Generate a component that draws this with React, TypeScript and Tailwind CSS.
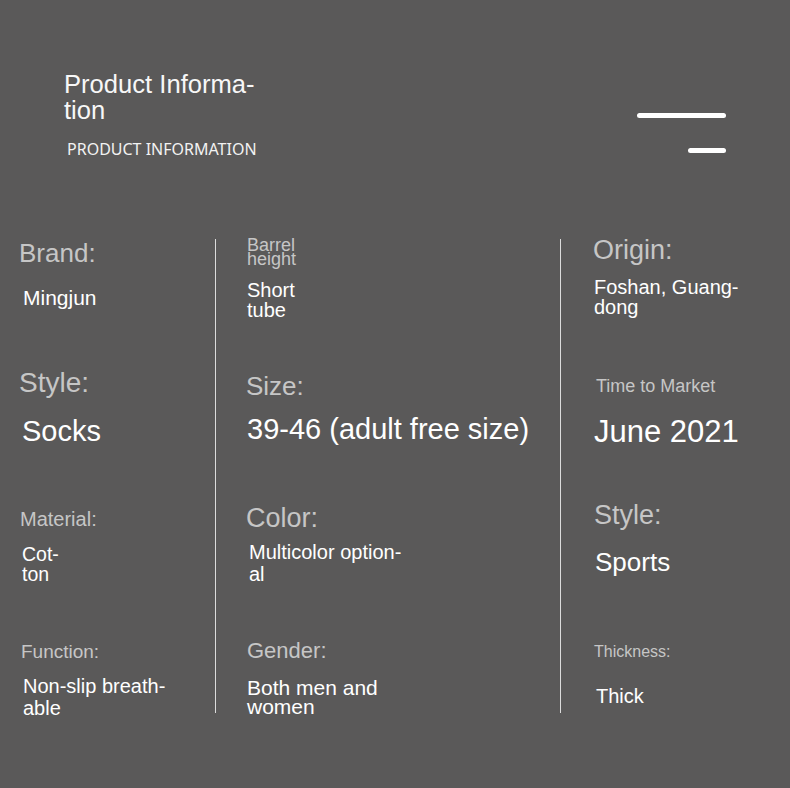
const Line = ({ children }: { children: React.ReactNode }) => (
  <span className="block whitespace-nowrap">{children}</span>
);

export default function App() {
  return (
    <div className="min-h-[788px] w-[790px] bg-[#5a5959] font-['Liberation_Sans',Arial,sans-serif] overflow-hidden">
      {/* Header */}
      <div className="flex justify-between px-[64px] h-[239px]">
        <div>
          <div className="mt-[71px] text-[25.6px] leading-[26px] text-[#f7f7f7]">
            <Line>Product Informa-</Line>
            <Line>tion</Line>
          </div>
          <div className="mt-[18px] ml-[3px] font-['Noto_Sans',sans-serif] text-[16px] leading-[16px] text-[#f2f2f2]">
            PRODUCT INFORMATION
          </div>
        </div>
        <div className="flex flex-col items-end pt-[113px] gap-[30px]">
          <div className="h-[5px] w-[89px] rounded-full bg-white" />
          <div className="h-[5px] w-[38px] rounded-full bg-white" />
        </div>
      </div>

      {/* Spec grid */}
      <div className="grid grid-cols-[216px_345px_1fr] grid-rows-[474px] h-[474px]">
        {/* Column 1 */}
        <div className="flex flex-col border-r border-[#dcdcdc]">
          <div className="mt-[1px] pl-[19px] text-[26px] leading-[26px] text-[#c6c6c6]">Brand:</div>
          <div className="mt-[21px] pl-[23px] text-[21px] leading-[21px] text-white">Mingjun</div>
          <div className="mt-[61px] pl-[19px] text-[28px] leading-[28px] text-[#c6c6c6]">Style:</div>
          <div className="mt-[20px] pl-[22px] text-[29px] leading-[29px] text-white">Socks</div>
          <div className="mt-[63px] pl-[20px] text-[20px] leading-[20px] text-[#c6c6c6]">Material:</div>
          <div className="mt-[15px] pl-[22px] text-[19.5px] leading-[20px] text-white">
            <Line>Cot-</Line>
            <Line>ton</Line>
          </div>
          <div className="mt-[58px] pl-[21px] text-[19px] leading-[19px] text-[#c6c6c6]">Function:</div>
          <div className="mt-[14px] pl-[23px] text-[20px] leading-[22px] text-white">
            <Line>Non-slip breath-</Line>
            <Line>able</Line>
          </div>
        </div>

        {/* Column 2 */}
        <div className="flex flex-col border-r border-[#dcdcdc]">
          <div className="-mt-[1px] pl-[31px] text-[18px] leading-[14px] text-[#c6c6c6]">
            <Line>Barrel</Line>
            <Line>height</Line>
          </div>
          <div className="mt-[14px] pl-[31px] text-[20px] leading-[20px] text-white">
            <Line>Short</Line>
            <Line>tube</Line>
          </div>
          <div className="mt-[53px] pl-[30px] text-[26px] leading-[26px] text-[#c6c6c6]">Size:</div>
          <div className="mt-[16px] pl-[31px] text-[29px] leading-[29px] text-white">39-46 (adult free size)</div>
          <div className="mt-[61px] pl-[30px] text-[27px] leading-[27px] text-[#c6c6c6]">Color:</div>
          <div className="mt-[9px] pl-[33px] text-[20px] leading-[22px] text-white">
            <Line>Multicolor option-</Line>
            <Line>al</Line>
          </div>
          <div className="mt-[55px] pl-[31px] text-[22px] leading-[22px] text-[#c6c6c6]">Gender:</div>
          <div className="mt-[16px] pl-[31px] text-[21px] leading-[19px] text-white">
            <Line>Both men and</Line>
            <Line>women</Line>
          </div>
        </div>

        {/* Column 3 */}
        <div className="flex flex-col">
          <div className="-mt-[2px] pl-[32px] text-[27px] leading-[27px] text-[#c6c6c6]">Origin:</div>
          <div className="mt-[13px] pl-[33px] text-[20px] leading-[20px] text-white">
            <Line>Foshan, Guang-</Line>
            <Line>dong</Line>
          </div>
          <div className="mt-[60px] pl-[35px] text-[18px] leading-[18px] text-[#c6c6c6]">Time to Market</div>
          <div className="mt-[21px] pl-[33px] text-[31px] leading-[31px] text-white">June 2021</div>
          <div className="mt-[55px] pl-[33px] text-[27px] leading-[27px] text-[#c6c6c6]">Style:</div>
          <div className="mt-[20px] pl-[34px] text-[26px] leading-[26px] text-white">Sports</div>
          <div className="mt-[69px] pl-[33px] text-[16px] leading-[16px] text-[#c6c6c6]">Thickness:</div>
          <div className="mt-[26px] pl-[35px] text-[20px] leading-[20px] text-white">Thick</div>
        </div>
      </div>
    </div>
  );
}
